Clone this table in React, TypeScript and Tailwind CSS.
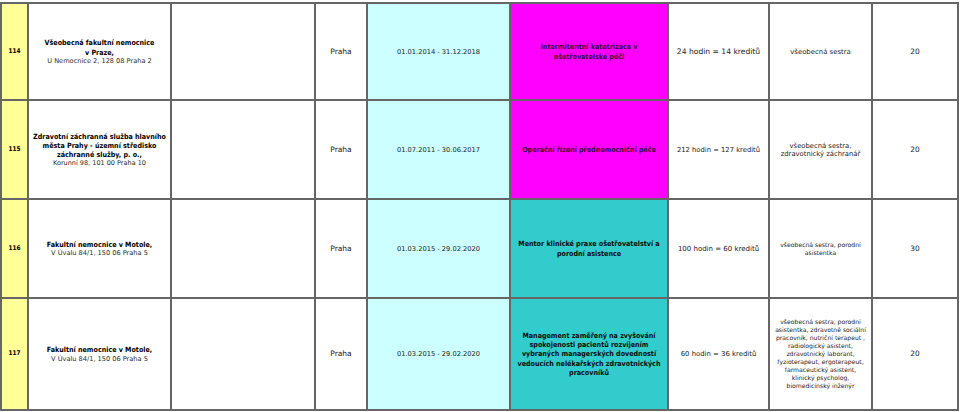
import React from 'react';

type Row = {
  no: string;
  org: string[];
  address: string;
  addressSize: string;
  dates: string;
  topic: string[];
  topicBg: string;
  hours: string;
  hoursSize: string;
  roles: string[];
  rolesSize: string;
  count: string;
  height: string;
};

// font sizes differ per cell, like the shrink-to-fit cells of the source sheet
const rows: Row[] = [
  {
    no: '114',
    org: ['Všeobecná fakultní nemocnice', 'v Praze,'],
    address: 'U Nemocnice 2, 128 08 Praha 2',
    addressSize: 'text-[6.6px]',
    dates: '01.01.2014 - 31.12.2018',
    topic: ['Intermitentní katetrizace v', 'ošetřovatelské péči'],
    topicBg: 'bg-[#ff00ff] text-[#3a003a]',
    hours: '24 hodin = 14 kreditů',
    hoursSize: 'text-[7.6px]',
    roles: ['všeobecná sestra'],
    rolesSize: 'text-[6.9px]',
    count: '20',
    height: 'h-[97px]',
  },
  {
    no: '115',
    org: ['Zdravotní záchranná služba hlavního', 'města Prahy - územní středisko', 'záchranné služby, p. o.,'],
    address: 'Korunní 98, 101 00 Praha 10',
    addressSize: 'text-[6.5px]',
    dates: '01.07.2011 - 30.06.2017',
    topic: ['Operační řízení přednemocniční péče'],
    topicBg: 'bg-[#ff00ff] text-[#3a003a]',
    hours: '212 hodin = 127 kreditů',
    hoursSize: 'text-[6.8px]',
    roles: ['všeobecná sestra,', 'zdravotnický záchranář'],
    rolesSize: 'text-[6.8px]',
    count: '20',
    height: 'h-[99px]',
  },
  {
    no: '116',
    org: ['Fakultní nemocnice v Motole,'],
    address: 'V Úvalu 84/1, 150 06 Praha 5',
    addressSize: 'text-[6.6px]',
    dates: '01.03.2015 - 29.02.2020',
    topic: ['Mentor klinické praxe ošetřovatelství a', 'porodní asistence'],
    topicBg: 'bg-[#33cccc] text-[#0a0a0a]',
    hours: '100 hodin = 60 kreditů',
    hoursSize: 'text-[7px]',
    roles: ['všeobecná sestra, porodní', 'asistentka'],
    rolesSize: 'text-[6.1px]',
    count: '30',
    height: 'h-[99px]',
  },
  {
    no: '117',
    org: ['Fakultní nemocnice v Motole,'],
    address: 'V Úvalu 84/1, 150 06 Praha 5',
    addressSize: 'text-[6.6px]',
    dates: '01.03.2015 - 29.02.2020',
    topic: [
      'Management zaměřený na zvyšování',
      'spokojenosti pacientů rozvíjením',
      'vybraných managerských dovedností',
      'vedoucích nelékařských zdravotnických',
      'pracovníků',
    ],
    topicBg: 'bg-[#33cccc] text-[#0a0a0a]',
    hours: '60 hodin = 36 kreditů',
    hoursSize: 'text-[6.9px]',
    roles: [
      'všeobecná sestra, porodní',
      'asistentka, zdravotně sociální',
      'pracovník, nutriční terapeut ,',
      'radiologický asistent,',
      'zdravotnický laborant,',
      'fyzioterapeut, ergoterapeut,',
      'farmaceutický asistent,',
      'klinický psycholog,',
      'biomedicínský inženýr',
    ],
    rolesSize: 'text-[6.1px]',
    count: '20',
    height: 'h-[112px]',
  },
];

const cell = 'border-2 border-[#666] text-center align-middle p-0';
const bold = 'font-bold font-stretch-condensed leading-[9.3px]';

export default function App() {
  return (
    <div className="w-[960px] h-[412px] bg-white pt-[2px] overflow-hidden font-['DejaVu_Sans',Verdana,sans-serif] text-[7.1px] leading-[8px] text-[#1a1a1a]">
      <table className="border-collapse table-fixed w-[959px]">
        <colgroup>
          <col className="w-[27px]" />
          <col className="w-[143px]" />
          <col className="w-[144px]" />
          <col className="w-[52px]" />
          <col className="w-[143px]" />
          <col className="w-[158px]" />
          <col className="w-[101px]" />
          <col className="w-[103px]" />
          <col className="w-[86px]" />
        </colgroup>
        <tbody>
          {rows.map((r) => (
            <tr key={r.no}>
              <td className={`${cell} ${r.height} bg-[#ffff99] ${bold} text-[6.4px] text-black`}>{r.no}</td>
              <td className={cell}>
                <div className={`${bold} text-black`}>
                  {r.org.map((l) => (
                    <div key={l} className="whitespace-nowrap">{l}</div>
                  ))}
                </div>
                <div className={`whitespace-nowrap text-[#2a2a2a] ${r.addressSize}`}>{r.address}</div>
              </td>
              <td className={cell}></td>
              <td className={`${cell} text-[7.5px]`}>Praha</td>
              <td className={`${cell} bg-[#ccffff] text-[6.7px]`}>{r.dates}</td>
              <td className={`${cell} ${r.topicBg} ${bold}`}>
                {r.topic.map((l) => (
                  <div key={l} className="whitespace-nowrap">{l}</div>
                ))}
              </td>
              <td className={`${cell} ${r.hoursSize}`}>{r.hours}</td>
              <td className={`${cell} ${r.rolesSize}`}>
                {r.roles.map((l) => (
                  <div key={l} className="whitespace-nowrap">{l}</div>
                ))}
              </td>
              <td className={`${cell} text-[7.4px]`}>{r.count}</td>
            </tr>
          ))}
        </tbody>
      </table>
    </div>
  );
}
